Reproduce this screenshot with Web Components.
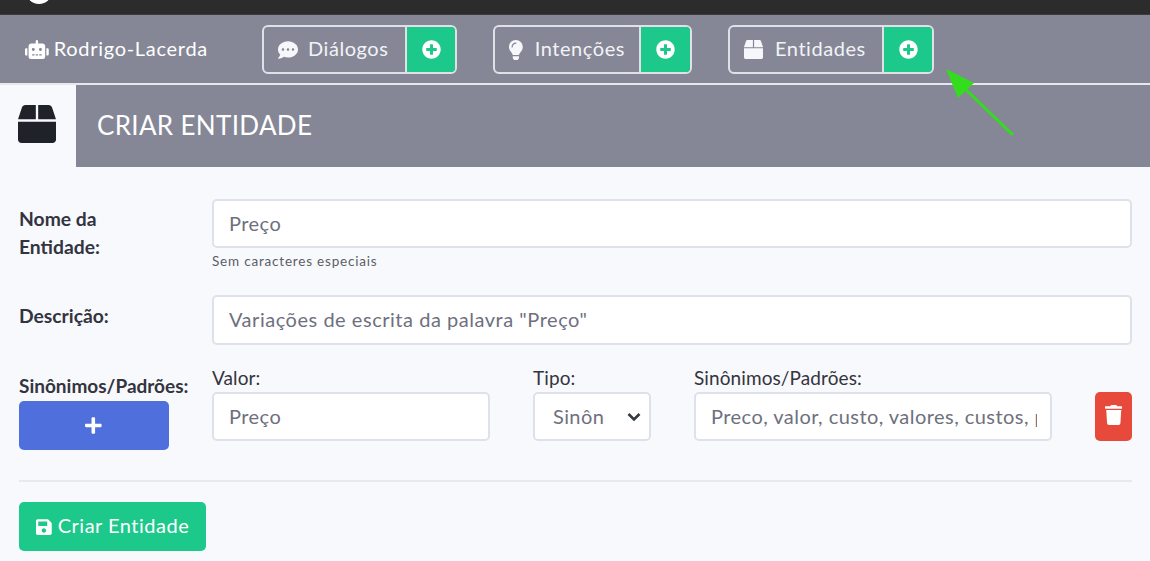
<!DOCTYPE html>
<html lang="pt">
<head>
<meta charset="UTF-8">
<title>Criar Entidade</title>
<style>
  body { margin: 0; background: #f8f9fc; font-family: "Lato", "Noto Sans", sans-serif; overflow: hidden; }
</style>
</head>
<body>

<app-page>
  <top-bar></top-bar>
  <nav-bar>
    <nav-brand>Rodrigo-Lacerda</nav-brand>
    <nav-group icon="comment" width="195" split="143" gap="10">Diálogos</nav-group>
    <nav-group icon="bulb" width="199" split="146" gap="12">Intenções</nav-group>
    <nav-group icon="box" width="206" split="154" gap="12">Entidades</nav-group>
  </nav-bar>
  <page-title>CRIAR ENTIDADE</page-title>
  <entity-form>
    <form-row style="--row-gap:25px">
      <span slot="label">Nome da Entidade:</span>
      <text-field>Preço</text-field>
      <small-hint>Sem caracteres especiais</small-hint>
    </form-row>
    <form-row style="--row-gap:22px;--label-top:7px">
      <span slot="label">Descrição:</span>
      <text-field tall>Variações de escrita da palavra "Preço"</text-field>
    </form-row>
    <synonym-row></synonym-row>
    <form-footer></form-footer>
  </entity-form>
  <green-arrow></green-arrow>
</app-page>

<script>
(function () {
  'use strict';

  const ICONS = {
    robot: ['0 0 640 512', 'M32,224H64V416H32A31.96166,31.96166,0,0,1,0,384V256A31.96166,31.96166,0,0,1,32,224Zm512-48V448a64.06328,64.06328,0,0,1-64,64H160a64.06328,64.06328,0,0,1-64-64V176a79.974,79.974,0,0,1,80-80H288V32a32,32,0,0,1,64,0V96H464A79.974,79.974,0,0,1,544,176ZM264,256a40,40,0,1,0-40,40A39.997,39.997,0,0,0,264,256Zm-8,128H192v32h64Zm96,0H288v32h64ZM456,256a40,40,0,1,0-40,40A39.997,39.997,0,0,0,456,256Zm-8,128H384v32h64ZM640,256V384a31.96166,31.96166,0,0,1-32,32H576V224h32A31.96166,31.96166,0,0,1,640,256Z'],
    comment: ['0 0 512 512', 'M256 32C114.6 32 0 125.1 0 240c0 49.6 21.4 95 57 130.7C44.5 421.1 2.7 466 2.2 466.5c-2.2 2.3-2.8 5.7-1.5 8.7S4.8 480 8 480c66.3 0 116-31.8 140.6-51.4 32.7 12.3 69 19.4 107.4 19.4 141.4 0 256-93.1 256-208S397.4 32 256 32zM128 272c-17.7 0-32-14.3-32-32s14.3-32 32-32 32 14.3 32 32-14.3 32-32 32zm128 0c-17.7 0-32-14.3-32-32s14.3-32 32-32 32 14.3 32 32-14.3 32-32 32zm128 0c-17.7 0-32-14.3-32-32s14.3-32 32-32 32 14.3 32 32-14.3 32-32 32z'],
    bulb: ['0 0 352 512', 'M96.06 454.35c.01 6.29 1.87 12.45 5.36 17.69l17.09 25.69a31.99 31.99 0 0 0 26.64 14.28h61.71a31.99 31.99 0 0 0 26.64-14.28l17.09-25.69a31.989 31.989 0 0 0 5.36-17.69l.04-38.35H96.01l.05 38.35zM0 176c0 44.37 16.45 84.85 43.56 115.78 16.52 18.85 42.36 58.23 52.21 91.45.04.26.07.52.11.78h160.24c.04-.26.07-.51.11-.78 9.85-33.22 35.69-72.6 52.21-91.45C335.55 260.85 352 220.37 352 176 352 78.61 272.91-.3 175.45 0 73.44.31 0 82.97 0 176zm176-80c-44.11 0-80 35.89-80 80 0 8.84-7.16 16-16 16s-16-7.16-16-16c0-61.76 50.24-112 112-112 8.84 0 16 7.16 16 16s-7.16 16-16 16z'],
    box: ['0 0 512 512', 'M509.5 184.6L458.9 32.8C452.4 13.2 434.1 0 413.4 0H272v192h238.7c-.4-2.5-.4-5-1.2-7.4zM240 0H98.6c-20.7 0-39 13.2-45.5 32.8L2.5 184.6c-.8 2.4-.8 4.9-1.2 7.4H240V0zM0 224v240c0 26.5 21.5 48 48 48h416c26.5 0 48-21.5 48-48V224H0z'],
    plusCircle: ['0 0 512 512', 'M256 8C119 8 8 119 8 256s111 248 248 248 248-111 248-248S393 8 256 8zm144 276c0 6.6-5.4 12-12 12h-92v92c0 6.6-5.4 12-12 12h-56c-6.6 0-12-5.4-12-12v-92h-92c-6.6 0-12-5.4-12-12v-56c0-6.6 5.4-12 12-12h92v-92c0-6.6 5.4-12 12-12h56c6.6 0 12 5.4 12 12v92h92c6.6 0 12 5.4 12 12v56z'],
    plus: ['0 0 448 512', 'M416 208H272V64c0-17.67-14.33-32-32-32h-32c-17.67 0-32 14.33-32 32v144H32c-17.67 0-32 14.33-32 32v32c0 17.67 14.33 32 32 32h144v144c0 17.67 14.33 32 32 32h32c17.67 0 32-14.33 32-32V304h144c17.67 0 32-14.33 32-32v-32c0-17.67-14.33-32-32-32z'],
    trash: ['0 0 448 512', 'M432 32H312l-9.4-18.7A24 24 0 0 0 281.1 0H166.8a23.72 23.72 0 0 0-21.4 13.3L136 32H16A16 16 0 0 0 0 48v32a16 16 0 0 0 16 16h416a16 16 0 0 0 16-16V48a16 16 0 0 0-16-16zM53.2 467a48 48 0 0 0 47.9 45h245.8a48 48 0 0 0 47.9-45L416 128H32z'],
    save: ['0 0 448 512', 'M433.941 129.941l-83.882-83.882A48 48 0 0 0 316.118 32H48C21.49 32 0 53.49 0 80v352c0 26.51 21.49 48 48 48h352c26.51 0 48-21.49 48-48V163.882a48 48 0 0 0-14.059-33.941zM224 416c-35.346 0-64-28.654-64-64 0-35.346 28.654-64 64-64s64 28.654 64 64c0 35.346-28.654 64-64 64zm96-304.52V212c0 6.627-5.373 12-12 12H76c-6.627 0-12-5.373-12-12V108c0-6.627 5.373-12 12-12h228.52c3.183 0 6.235 1.264 8.485 3.515l3.48 3.48A11.996 11.996 0 0 1 320 111.48z']
  };

  const svg = (name, h, color) => {
    const [box, d] = ICONS[name];
    const [, , vw, vh] = box.split(' ').map(Number);
    return `<svg viewBox="${box}" width="${h * vw / vh}" height="${h}" style="display:block;flex:none" fill="${color}"><path d="${d}"/></svg>`;
  };

  const define = (tag, css, html) => {
    customElements.define(tag, class extends HTMLElement {
      constructor() {
        super();
        const root = this.attachShadow({ mode: 'open' });
        root.innerHTML = `<style>${css}</style>${typeof html === 'function' ? html(this) : html}`;
      }
    });
  };

  define('app-page', ':host{display:block;position:relative;width:1150px;height:561px;overflow:hidden;background:#f8f9fc;}', '<slot></slot>');

  define('top-bar', `
    :host{display:block;height:14px;background:#2c2c2c;border-bottom:1px solid #3b3b40;overflow:hidden;}
    .logo{width:26px;height:26px;border-radius:50%;background:#fff;margin:-22px 0 0 26px;}
  `, '<div class="logo"></div>');

  define('nav-bar', `
    :host{display:flex;align-items:flex-start;gap:36px;height:70px;padding:10px 0 0 0;box-sizing:border-box;background:#858796;border-bottom:2px solid #e6e8ee;}
  `, '<slot></slot>');

  define('nav-brand', `
    :host{display:flex;align-items:center;gap:5px;width:226px;height:49px;margin-left:25px;margin-right:-25px;color:#fff;font-size:20px;letter-spacing:.7px;}
    .txt{padding-bottom:3px;}
  `, () => svg('robot', 19, '#fff') + '<span class="txt"><slot></slot></span>');

  define('nav-group', `
    :host{display:block;}
    .wrap{display:flex;height:49px;box-sizing:border-box;border:2px solid #e0e1e7;border-radius:6px;overflow:hidden;}
    .main{display:flex;align-items:center;padding-left:14px;color:#f2f3f6;font-size:20px;letter-spacing:.55px;box-sizing:border-box;border-right:2px solid #e0e1e7;}
    .txt{padding-bottom:3px;}
    .add{flex:1;background:#1cc88a;display:flex;align-items:center;justify-content:center;}
  `, (el) => {
    const icon = el.getAttribute('icon');
    const h = icon === 'box' ? 19 : 20;
    return `<div class="wrap" style="width:${el.getAttribute('width')}px"><div class="main" style="width:${el.getAttribute('split')}px;gap:${el.getAttribute('gap')}px">${svg(icon, h, '#f6f7fa')}<span class="txt"><slot></slot></span></div><div class="add">${svg('plusCircle', 19, '#fff')}</div></div>`;
  });

  define('page-title', `
    :host{display:flex;height:82px;}
    .icon{width:76px;background:#f8f9fc;display:flex;padding:20px 0 0 18px;box-sizing:border-box;}
    .bar{flex:1;background:#858796;display:flex;align-items:center;padding:0 0 3px 21px;color:#fff;font-size:26px;letter-spacing:.33px;}
  `, () => `<div class="icon">${svg('box', 38, '#1f2229')}</div><div class="bar"><slot></slot></div>`);

  define('entity-form', ':host{display:block;padding:32px 18px 0 19px;}', '<slot></slot>');

  define('form-row', `
    :host{display:grid;grid-template-columns:193px 1fr;margin-bottom:var(--row-gap,0);}
    .label{padding-top:var(--label-top,6px);color:#33343f;font-size:19.3px;line-height:28px;font-weight:700;width:120px;}
  `, '<div class="label"><slot name="label"></slot></div><div class="body"><slot></slot></div>');

  define('text-field', `
    :host{display:flex;align-items:center;box-sizing:border-box;height:49px;padding:0 13px 2px 15px;background:#fff;border:2px solid #dfe1ea;border-radius:5px;color:#6e707e;font-size:20px;white-space:nowrap;letter-spacing:.45px;}
    :host([tall]){height:50px;letter-spacing:.53px;}
    .clip{flex:1;overflow:hidden;}
  `, '<div class="clip"><slot></slot></div>');

  define('small-hint', `
    :host{display:block;margin-top:5px;color:#5b5d68;font-size:13.5px;line-height:17px;letter-spacing:.8px;}
  `, '<slot></slot>');

  define('synonym-row', `
    :host{display:grid;grid-template-columns:193px 278px 43px 118px 43px 358px 43px 37px;color:#33343f;}
    .left b{display:block;margin-top:6px;font-size:19px;line-height:26px;font-weight:700;white-space:nowrap;}
    .add{width:149.5px;height:49px;border-radius:5px;background:#4e6fdc;display:flex;align-items:center;justify-content:center;margin-top:2px;}
    .cap{display:block;font-size:19px;line-height:21px;height:25px;white-space:nowrap;letter-spacing:.1px;}
    .trash{margin-top:25px;height:49px;border-radius:5px;background:#e74a3b;display:flex;align-items:center;justify-content:center;padding-bottom:3px;box-sizing:border-box;}
  `, () => `
    <div class="left"><b>Sinônimos/Padrões:</b><div class="add">${svg('plus', 19, '#fff')}</div></div>
    <div><span class="cap">Valor:</span><text-field>Preço</text-field></div>
    <div></div>
    <div><span class="cap">Tipo:</span><select-field>Sinôn</select-field></div>
    <div></div>
    <div><span class="cap">Sinônimos/Padrões:</span><text-field>Preco, valor, custo, valores, custos, p</text-field></div>
    <div></div>
    <div class="trash">${svg('trash', 20, '#fff')}</div>
  `);

  define('select-field', `
    :host{display:flex;align-items:center;justify-content:space-between;box-sizing:border-box;height:49px;padding:0 8px 0 18px;background:#fff;border:2px solid #dfe1ea;border-radius:5px;color:#6e707e;font-size:20px;letter-spacing:.4px;}
    .txt{padding-bottom:2px;}
    svg{display:block;}
  `, '<span class="txt"><slot></slot></span><svg width="14" height="10" viewBox="0 0 14 10"><path d="M1.5 2l5.5 5.5L12.5 2" fill="none" stroke="#343a40" stroke-width="2.6"/></svg>');

  define('form-footer', `
    :host{display:block;margin-top:30px;border-top:2px solid #e8e9ee;padding-top:20px;}
    .save{display:inline-flex;align-items:center;gap:6px;box-sizing:border-box;width:187px;height:49px;padding-left:17px;border-radius:5px;background:#1cc88a;color:#fff;font-size:20px;letter-spacing:.5px;}
    .txt{padding-bottom:3px;}
  `, () => `<div class="save">${svg('save', 18, '#fff')}<span class="txt">Criar Entidade</span></div>`);

  define('green-arrow', `
    :host{position:absolute;left:0;top:0;width:1150px;height:561px;pointer-events:none;}
    svg{display:block;}
  `, '<svg width="1150" height="561"><line x1="1013" y1="135" x2="962" y2="86" stroke="#33dd1e" stroke-width="3"/><polygon points="946,69 974,83 958,98" fill="#33dd1e"/></svg>');
})();
</script>
</body>
</html>
